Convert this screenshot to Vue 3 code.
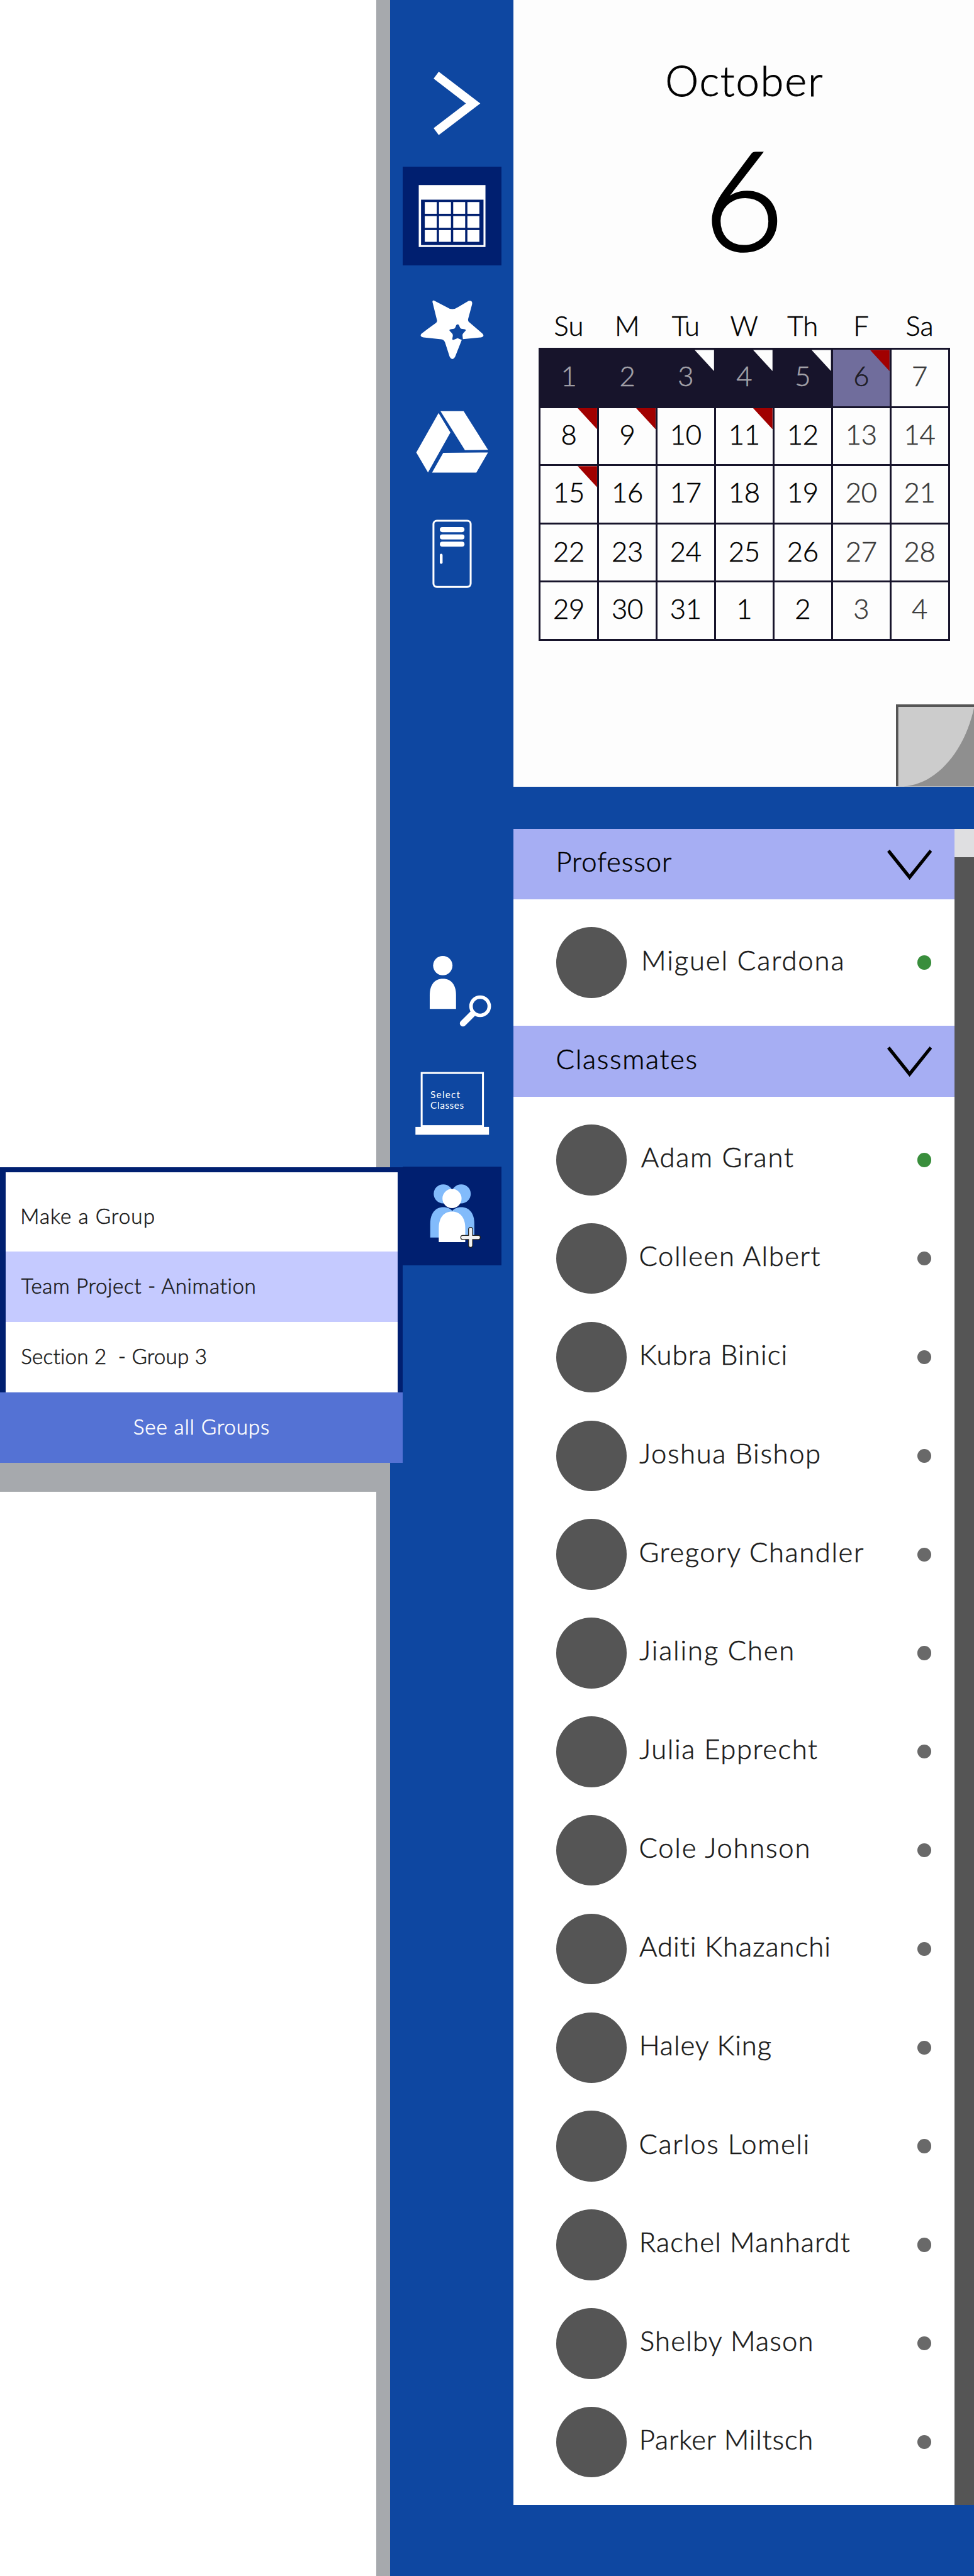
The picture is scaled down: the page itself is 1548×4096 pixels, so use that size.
<script setup>
const FAMILY = 'Lato, "Open Sans", sans-serif'
const ctx = document.createElement('canvas').getContext('2d')

// Tracks a light-weight label so that its ink spans `width` pixels,
// and cancels the first glyph's side bearing.
function track(text, size, width) {
  ctx.font = `300 ${size}px ${FAMILY}`
  const m = ctx.measureText(text)
  const ink = m.actualBoundingBoxRight + m.actualBoundingBoxLeft
  const spacing = (width - ink) / (text.length - 1)
  return {
    letterSpacing: spacing.toFixed(3) + 'px',
    marginLeft: m.actualBoundingBoxLeft.toFixed(2) + 'px',
    marginRight: (-spacing).toFixed(2) + 'px',
  }
}

const weekdays = ['Su', 'M', 'Tu', 'W', 'Th', 'F', 'Sa']
const flags = { 2: 'white', 3: 'white', 4: 'white', 5: 'red', 7: 'red', 8: 'red', 10: 'red', 14: 'red' }
const days = Array.from({ length: 35 }, (_, i) => ({
  n: i < 31 ? i + 1 : i - 30,
  flag: flags[i],
  cls: {
    past: i < 5,
    today: i === 5,
    soft: i !== 5 && i % 7 > 4,
    low: i > 20 && i < 28,
  },
}))

const professors = [{ name: 'Miguel Cardona', x: 206.8, w: 315.5, on: true }]
const classmates = [
  { name: 'Adam Grant', x: 202.5, w: 242.2, on: true },
  { name: 'Colleen Albert', x: 201.2, w: 287.6 },
  { name: 'Kubra Binici', x: 203.5, w: 228.8 },
  { name: 'Joshua Bishop', x: 200, w: 285.9 },
  { name: 'Gregory Chandler', x: 201.2, w: 355.6 },
  { name: 'Jialing Chen', x: 200, w: 243.1 },
  { name: 'Julia Epprecht', x: 200, w: 282.8 },
  { name: 'Cole Johnson', x: 201.2, w: 268.4 },
  { name: 'Aditi Khazanchi', x: 199.7, w: 302.1 },
  { name: 'Haley King', x: 203.5, w: 207.2 },
  { name: 'Carlos Lomeli', x: 201.2, w: 266.1 },
  { name: 'Rachel Manhardt', x: 203.5, w: 331.1 },
  { name: 'Shelby Mason', x: 201.7, w: 272.8 },
  { name: 'Parker Miltsch', x: 203.5, w: 270.5 },
]
const sections = [
  { title: 'Professor', x: 71.2, w: 179.7, people: professors, cls: 'professor' },
  { title: 'Classmates', x: 69.4, w: 220.9, people: classmates, cls: 'classmates' },
]

const groups = [
  { label: 'Make a Group', x: 26.6, w: 209.4 },
  { label: 'Team Project - Animation', x: 25, w: 372.6, active: true },
  { label: 'Section 2  - Group 3', x: 25.6, w: 294 },
]
</script>

<template>
  <div class="screen">
    <div class="blank"></div>
    <div class="edge"></div>

    <nav class="rail">
      <div class="tools">
        <div class="tool">
          <svg viewBox="951.9 127.9 233.5 233.5">
            <path fill="#fff" d="M1037.1 169.6 1135.4 244.6 1037.1 319.6 1025 303.2 1101.4 244.6 1025 185.8Z" />
          </svg>
        </div>
        <div class="tool active">
          <svg viewBox="951.9 394.4 233.5 233.5">
            <path fill="#fff" fill-rule="evenodd" d="M989.8 438H1147.6V584.4H989.8ZM995.2 472.5V580H1143V472.5Z" />
            <g v-for="r in 3" :key="r" fill="#fff">
              <rect v-for="c in 4" :key="c" :x="970.5 + c * 33.6" :y="444.9 + r * 33.2" width="28.3" height="27.8" />
            </g>
          </svg>
        </div>
        <div class="tool">
          <svg viewBox="951.9 660.9 233.5 233.5">
            <path fill="#fff" d="M1025.5 711.3 1055.5 726.8Q1069.3 736.5 1083 726.8L1107.5 712.3Q1117.5 710 1116 720L1107 753.5Q1105.2 759.5 1109 762.5L1140.5 789.5Q1146.5 796 1137 798.6L1094.5 802.6 1091.7 804.3 1076 844Q1069.3 855.5 1062.8 844L1052 810.5Q1049.5 804 1043 803L1001 798.6Q991 796.5 996 790L1011.5 778 1030.5 764.5Q1034.5 761 1032.5 756L1022.3 715Q1021.8 710.5 1025.5 711.3Z" />
            <path fill="#0e47a1" d="M1078.5 769.5Q1081.7 765.8 1085 769.5L1087 774.5Q1088 777.6 1090.5 778L1098 779.2Q1103.5 780.5 1099 784.5L1095 789Q1093 791 1093.3 794L1094.5 804.5 1091.7 804.6 1081.7 800.3 1072.5 804.3Q1068.5 805.5 1069.2 801.5L1070.5 795Q1070.8 791.5 1068.5 789L1063.5 783.8Q1060.5 780 1065.5 779.2L1073 778Q1075.5 777.6 1076.5 774.5Z" />
          </svg>
        </div>
        <div class="tool">
          <svg viewBox="951.9 927.4 233.5 233.5">
            <g fill="#fff">
              <path d="M1036.7 977.8 1064.7 1023.7 1011.7 1118.1 984 1071.1Z" />
              <path d="M1041.3 973.2H1096L1153.7 1064.8 1099 1065.5Z" />
              <path d="M1047.7 1071.6 1153.7 1071.1 1126 1118.6H1021.3Z" />
            </g>
          </svg>
        </div>
        <div class="tool">
          <svg viewBox="951.9 1193.9 233.5 233.5">
            <rect x="1024.6" y="1232.5" width="88" height="156.7" rx="8" fill="none" stroke="#fff" stroke-width="4.5" />
            <g fill="#fff">
              <rect x="1039.7" y="1247.6" width="58.3" height="12" rx="6" />
              <rect x="1039.7" y="1264.9" width="58.3" height="12" rx="6" />
              <rect x="1039.7" y="1281.9" width="58.3" height="12" rx="6" />
              <rect x="1039.6" y="1310.9" width="6.6" height="23.5" rx="3" />
            </g>
          </svg>
        </div>
      </div>

      <div class="tools people-tools">
        <div class="tool">
          <svg viewBox="951.9 2228 233.5 233.5">
            <circle cx="1046.7" cy="2285" r="22.9" fill="#fff" />
            <path fill="#fff" d="M1015.8 2387.8V2355C1015.8 2331 1027 2316.3 1046.9 2316.3S1078 2331 1078 2355V2387.8Z" />
            <circle cx="1135" cy="2381.3" r="21.6" fill="none" stroke="#fff" stroke-width="8.3" />
            <path d="M1117.5 2398.8 1094.4 2421.9" stroke="#fff" stroke-width="14.8" stroke-linecap="round" />
          </svg>
        </div>
        <div class="tool">
          <svg viewBox="951.9 2494.5 233.5 233.5">
            <rect x="996.7" y="2539.3" width="145" height="125.8" fill="none" stroke="#fff" stroke-width="4.5" />
            <rect x="982" y="2667" width="174" height="18.5" fill="#fff" />
            <g class="board-text">
              <text x="1017.5" y="2598" textLength="70">Select</text>
              <text x="1017.5" y="2623.7" textLength="79">Classes</text>
            </g>
          </svg>
        </div>
        <div class="tool active">
          <svg viewBox="951.9 2761 233.5 233.5">
            <g fill="#82bbfb">
              <circle cx="1047.8" cy="2825.5" r="22.6" />
              <circle cx="1090.2" cy="2825.5" r="22.6" />
              <path d="M1017 2928.9V2896C1017 2872 1029 2857.1 1048 2857.1S1079 2872 1079 2896V2928.9Z" />
              <path d="M1059.2 2928.9V2896C1059.2 2872 1071 2857.1 1090.3 2857.1S1121.3 2872 1121.3 2896V2928.9Z" />
            </g>
            <g fill="#fff">
              <circle cx="1068.5" cy="2836.6" r="22.6" />
              <path d="M1037.2 2939.7V2906.5C1037.2 2882 1049 2867.5 1068.5 2867.5S1099.8 2882 1099.8 2906.5V2939.7Z" />
            </g>
            <g fill="none" stroke-linecap="round">
              <path d="M1094 2928.6H1130.7M1112.4 2909.6V2947.2" stroke="#222" stroke-width="11.6" />
              <path d="M1094 2928.6H1130.7M1112.4 2909.6V2947.2" stroke="#f2f2f2" stroke-width="7.6" />
            </g>
          </svg>
        </div>
      </div>
    </nav>

    <main class="content">
      <section class="calendar">
        <h1 class="month"><span :style="track('October', 67, 246.8)">October</span></h1>
        <div class="date">6</div>
        <div class="weekdays">
          <span v-for="d in weekdays" :key="d">{{ d }}</span>
        </div>
        <div class="days">
          <div v-for="(d, i) in days" :key="i" class="day" :class="d.cls">
            {{ d.n }}<i v-if="d.flag" class="flag" :class="d.flag"></i>
          </div>
        </div>
        <svg class="fold" viewBox="2118 1667 185 194" preserveAspectRatio="none">
          <path fill="#555" d="M2118 1667H2303V1861H2118Z" />
          <path fill="#ccc" d="M2123.5 1673H2303V1861H2123.5Z" />
          <path fill="#8f8f8f" d="M2136 1861C2210 1858 2280 1782 2303 1673V1861Z" />
        </svg>
      </section>

      <div class="roster">
        <div class="lists">
          <section v-for="s in sections" :key="s.title" :class="s.cls">
            <header class="bar">
              <h2 :style="{ paddingLeft: s.x + 'px' }"><span :style="track(s.title, 43.6, s.w)">{{ s.title }}</span></h2>
              <svg class="caret" viewBox="2097.3 2010.6 106 71.6">
                <path d="M2103.3 2010.6 2150.3 2069.2 2197.7 2010.6 2203.3 2015.6 2150.3 2082.2 2097.3 2015.6Z" />
              </svg>
            </header>
            <ul>
              <li v-for="p in s.people" :key="p.name">
                <span class="avatar"></span>
                <span class="name" :style="{ paddingLeft: p.x - 180 + 'px' }"><span :style="track(p.name, 43.6, p.w)">{{ p.name }}</span></span>
                <span class="dot" :class="{ on: p.on }"></span>
              </li>
            </ul>
          </section>
        </div>
        <div class="scroll"><div class="thumb"></div></div>
      </div>
    </main>

    <aside class="popup">
      <div class="menu">
        <div v-for="g in groups" :key="g.label" class="item" :class="{ selected: g.active }" :style="{ paddingLeft: g.x + 'px' }">
          <span :style="track(g.label, 33.2, g.w)">{{ g.label }}</span>
        </div>
      </div>
      <div class="all"><span :style="track('See all Groups', 33.2, 214.2)">See all Groups</span></div>
      <div class="shadow"></div>
    </aside>
  </div>
</template>

<style>
body {
  margin: 0;
  background: #fff;
}
</style>

<style scoped>
.screen {
  position: relative;
  display: flex;
  width: 1548px;
  height: 4096px;
  overflow: hidden;
  background: #fff;
  font-family: Lato, 'Open Sans', sans-serif;
  font-weight: 300;
  font-kerning: normal;
  -webkit-text-stroke: 0.6px currentColor;
}
.blank {
  width: 597.8px;
}
.edge {
  width: 22.4px;
  background: #a6a9ad;
}
.rail {
  width: 196px;
  background: #0e47a1;
}
.tools {
  display: flex;
  flex-direction: column;
  align-items: center;
  gap: 22.2px;
  padding-top: 86px;
}
.people-tools {
  padding-top: 538px;
}
.tool {
  width: 157px;
  height: 156.9px;
}
.tool svg {
  display: block;
  width: 100%;
  height: 100%;
}
.tool.active {
  background: #001f70;
}
.board-text {
  fill: #fff;
  font-size: 23px;
  font-weight: 400;
  -webkit-text-stroke: 0;
}
.content {
  flex: 1;
  background: #0e47a1;
}
.calendar {
  position: relative;
  box-sizing: border-box;
  height: 1250.6px;
  padding-top: 87.2px;
  background: #fdfdfd;
  color: #000;
}
.month {
  margin: 0;
  padding-left: 244px;
  font-size: 67px;
  font-weight: 300;
  line-height: 80px;
  white-space: nowrap;
  -webkit-text-stroke-width: 0.9px;
}
.date {
  margin-top: 45.9px;
  padding-left: 0;
  font-size: 220px;
  line-height: 200px;
  text-align: center;
  -webkit-text-stroke-width: 3.6px;
}
.weekdays {
  display: grid;
  grid-template-columns: repeat(7, 1fr);
  width: 650.6px;
  margin: 79.4px 0 11px 41.3px;
  font-size: 43.6px;
  line-height: 50px;
  text-align: center;
}
.days {
  display: grid;
  grid-template-columns: repeat(7, 1fr);
  grid-template-rows: repeat(5, 1fr);
  gap: 3px;
  box-sizing: border-box;
  width: 653.6px;
  height: 465.1px;
  margin-left: 39.8px;
  padding: 3px;
  background: #17142b;
}
.day {
  position: relative;
  display: flex;
  align-items: center;
  justify-content: center;
  padding-bottom: 8px;
  background: #fdfdfd;
  font-size: 43.6px;
  line-height: 50px;
  letter-spacing: -0.3px;
}
.day.low {
  padding-bottom: 5px;
}
.day.past {
  background: #17142b;
  color: #a2a1a8;
}
.day.today {
  background: #706d9c;
  color: #1c1b24;
}
.day.soft {
  color: #3b3b3b;
}
.flag {
  position: absolute;
  top: 0;
  right: 0;
  width: 30.8px;
  height: 33.5px;
  clip-path: polygon(0 0, 100% 0, 100% 100%);
}
.flag.white {
  background: #fdfdfd;
}
.flag.red {
  background: #a10000;
}
.fold {
  position: absolute;
  right: 0;
  bottom: 0;
  width: 124.3px;
  height: 130.3px;
}
.roster {
  display: flex;
  height: 2665.8px;
  margin-top: 67.1px;
  background: #fff;
}
.lists {
  flex: 1;
}
.bar {
  display: flex;
  align-items: center;
  justify-content: space-between;
  height: 112.35px;
  padding-right: 36.1px;
  background: #a6aef3;
}
.bar h2 {
  margin: 0;
  padding-bottom: 9px;
  color: #000;
  font-size: 43.6px;
  font-weight: 300;
  line-height: 54px;
}
.caret {
  width: 71.3px;
  height: 48.2px;
  padding-top: 2px;
}
ul {
  margin: 0;
  padding: 22.4px 0;
  list-style: none;
}
li {
  display: flex;
  align-items: center;
  height: 156.83px;
  padding: 0 36.7px 0 67.5px;
}
.professor li {
  height: 156.4px;
}
.avatar {
  width: 112.5px;
  height: 112.5px;
  border-radius: 50%;
  background: #555;
}
.name {
  flex: 1;
  padding-bottom: 10px;
  color: #1a1a1a;
  font-size: 43.6px;
  line-height: 54px;
  white-space: nowrap;
}
.dot {
  width: 22.3px;
  height: 22.3px;
  border-radius: 50%;
  background: #696969;
}
.dot.on {
  background: #398e3c;
}
.scroll {
  width: 30.9px;
  background: #555;
}
.thumb {
  height: 45.3px;
  background: #dfdfe1;
}
.popup {
  position: absolute;
  top: 1855.5px;
  left: 0;
  width: 639.9px;
  color: #1a1a1a;
  font-size: 33.2px;
  line-height: 40px;
  white-space: pre;
}
.menu {
  padding: 8.3px 8.4px 0 8.7px;
  background: #001f70;
}
.item {
  display: flex;
  align-items: center;
  box-sizing: border-box;
  height: 111.95px;
  padding-bottom: 3px;
  background: #fff;
}
.item:first-child {
  height: 126px;
  padding-top: 15px;
}
.item.selected {
  background: #c5caff;
}
.all {
  display: flex;
  align-items: center;
  justify-content: center;
  box-sizing: border-box;
  height: 112.3px;
  padding: 0 0 3px 1px;
  background: #5472d4;
  color: #fff;
}
.shadow {
  width: 597.8px;
  height: 46.4px;
  background: #a6a9ad;
}
</style>
